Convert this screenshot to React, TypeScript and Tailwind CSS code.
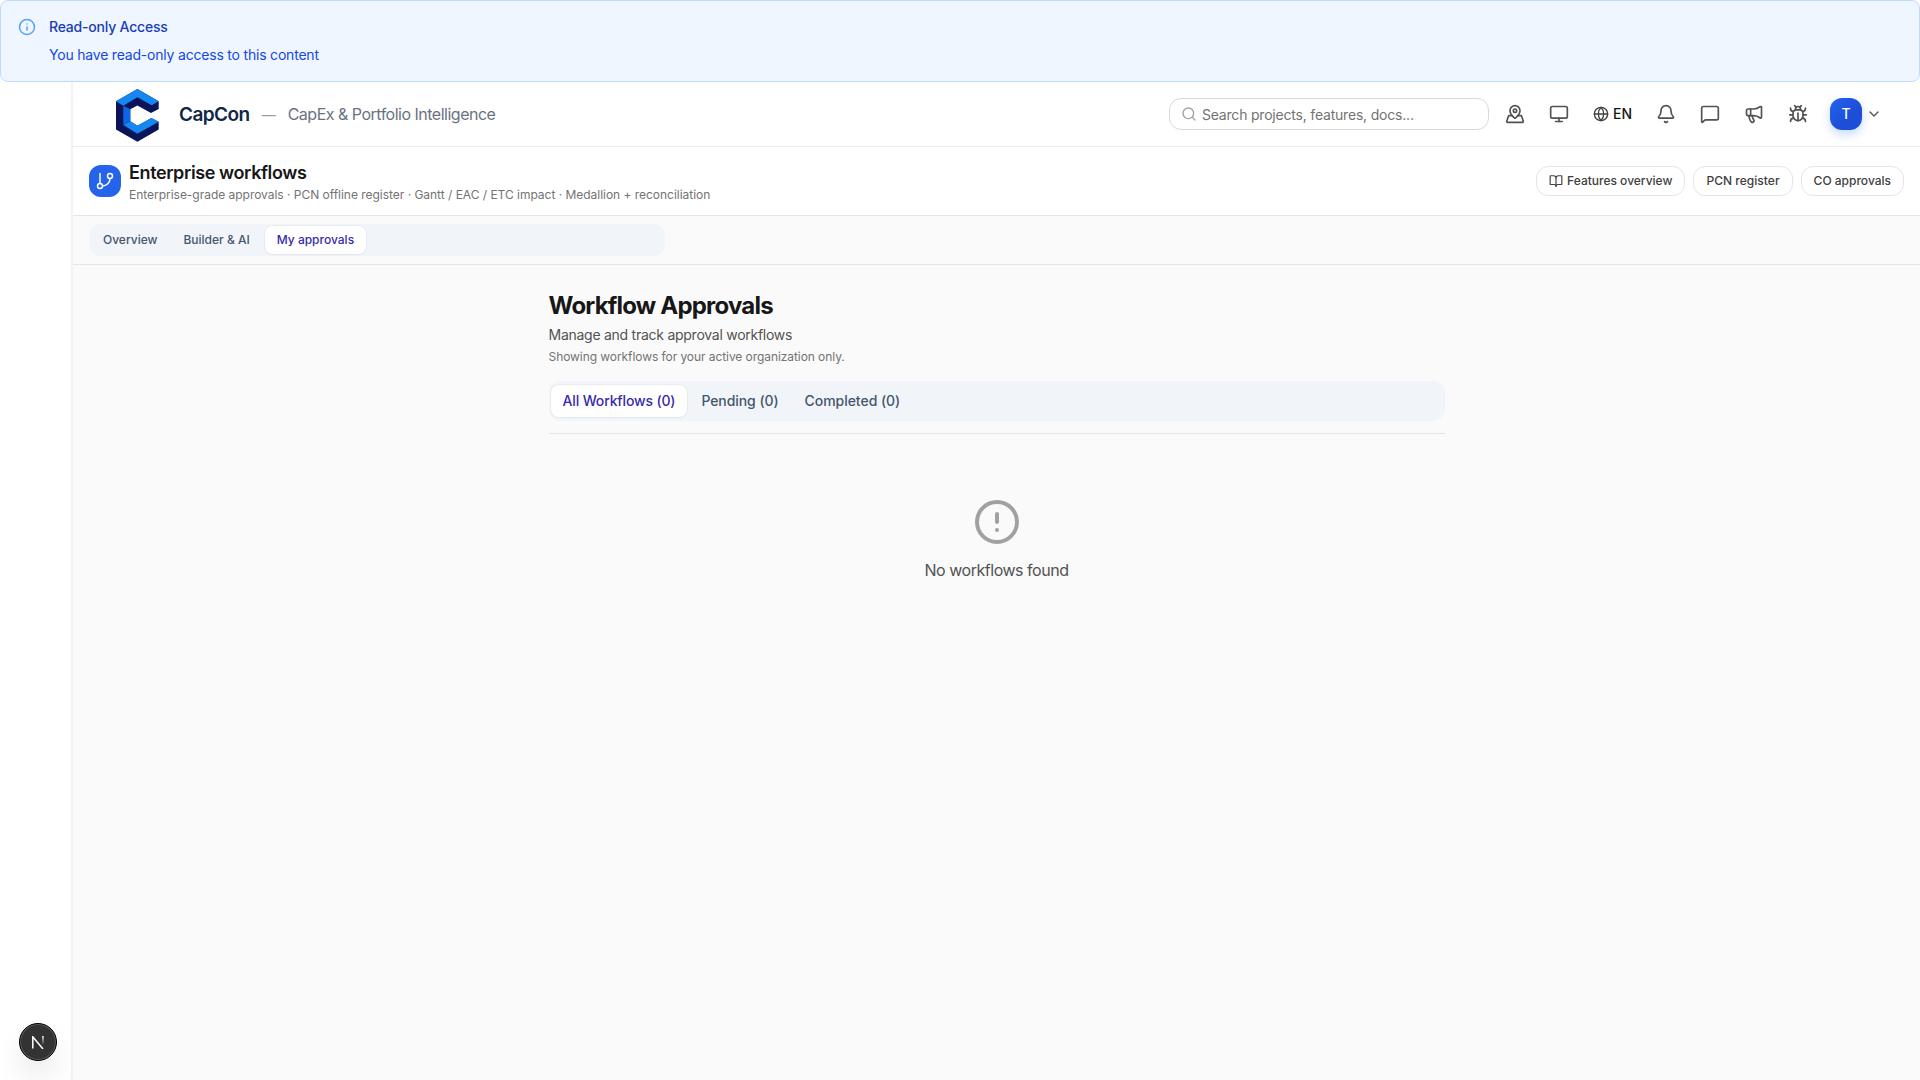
import React from "react";
import {
  Bell,
  BookOpen,
  Bug,
  ChevronDown,
  CircleAlert,
  GitBranch,
  Globe,
  Info,
  MapPinned,
  Megaphone,
  MessageSquare,
  Monitor,
  Search,
} from "lucide-react";

const Banner = () => (
  <div className="flex h-[82px] shrink-0 gap-[13px] rounded-lg border border-[#bedbff] bg-[#eff6ff] px-4 pt-4">
    <Info className="mt-px ml-px h-[18px] w-[18px] text-[#51a2ff]" />
    <div className="text-sm tracking-[-0.2px]">
      <h3 className="font-medium text-[#193cb8]">Read-only Access</h3>
      <p className="mt-2 text-[#1447e6]">
        You have read-only access to this content
      </p>
    </div>
  </div>
);

const Logo = () => (
  <svg className="mt-0.5 h-[53px] w-[43px]" viewBox="0 0 43 53">
    <path
      d="M0 12.300 21.400 0 42.700 12.300V20L35 24 21.400 16.500 14.300 20.300v12L21.400 36.700l14-7.700 7.300 3.700v7.800L21.400 52.700 0 40.500z"
      fill="#0b1458"
    />
    <path
      d="M0 12.300 21.400 0 42.700 12.300 35.700 16.300 21.400 8.300 7.300 16.700z"
      fill="#1488f0"
    />
    <path d="M7.300 16.700 14.300 20.300v12L7.300 36z" fill="#0a68e4" />
    <path
      d="M7.300 36 14.300 32.300 21.400 36.700l14-7.700 7.300 3.700-21.300 12z"
      fill="#1488f0"
    />
  </svg>
);

const headerIcons = [Bell, MessageSquare, Megaphone, Bug];

const Header = () => (
  <header className="flex h-[65px] shrink-0 items-center border-b border-[#ededed] bg-white pr-[38px] pl-[43px]">
    <Logo />
    <span className="ml-5 pt-0.5 text-[19px] font-semibold tracking-[-0.55px] text-[#0f2747]">
      CapCon
    </span>
    <span className="ml-3 pt-px text-sm text-[#99a1af]">—</span>
    <span className="ml-3 text-base tracking-[-0.5px] text-[#6a7282]">
      CapEx &amp; Portfolio Intelligence
    </span>
    <div className="ml-auto flex items-center">
      <div className="flex h-8 w-80 items-center gap-[5px] rounded-xl border border-[#d9d9d9] px-[11px] text-sm tracking-[-0.2px] text-[#737373]">
        <Search className="h-4 w-4 text-[#a1a1a1]" />
        <span className="pt-px">Search projects, features, docs...</span>
      </div>
      <MapPinned className="ml-4 h-5 w-5 text-[#525252]" />
      <Monitor className="ml-6 h-5 w-5 text-[#525252]" />
      <div className="ml-6 flex items-center gap-1 text-sm font-medium text-[#171717]">
        <Globe className="h-4 w-4 text-[#404040]" />
        EN
      </div>
      <div className="ml-6 flex items-center gap-6 text-[#525252]">
        {headerIcons.map((Icon, i) => (
          <Icon key={i} className="h-5 w-5" />
        ))}
      </div>
      <div className="ml-[22px] flex h-8 w-8 items-center justify-center rounded-xl bg-linear-to-br from-[#2563eb] to-[#1d4ed8] to-60% text-sm font-medium text-white shadow-[0_4px_10px_rgba(59,130,246,0.3)]">
        T
      </div>
      <ChevronDown className="ml-1 h-4 w-4 text-[#525252]" />
    </div>
  </header>
);

const PageTitle = () => (
  <div className="flex h-[69px] shrink-0 items-center border-b border-[#e5e5e5] bg-white px-4">
    <div className="flex h-8 w-8 items-center justify-center rounded-xl bg-[#2563eb] text-white">
      <GitBranch className="h-5 w-5" strokeWidth={1.75} />
    </div>
    <div className="ml-2 pt-0.5">
      <h1 className="text-lg leading-6 font-semibold tracking-[-0.39px] text-[#171717]">
        Enterprise workflows
      </h1>
      <p className="mt-0.5 text-xs leading-4 tracking-[-0.025px] text-[#737373]">
        Enterprise-grade approvals · PCN offline register · Gantt / EAC / ETC
        impact · Medallion + reconciliation
      </p>
    </div>
    <div className="ml-auto flex gap-2 text-xs font-medium text-[#404040]">
      <button className="flex h-[30px] items-center gap-1 rounded-xl border border-[#e5e5e5] px-3">
        <BookOpen className="h-3.5 w-3.5" />
        Features overview
      </button>
      <button className="h-[30px] rounded-xl border border-[#e5e5e5] px-3 tracking-[0.03px]">
        PCN register
      </button>
      <button className="h-[30px] rounded-xl border border-[#e5e5e5] px-3">
        CO approvals
      </button>
    </div>
  </div>
);

const SectionTabs = () => (
  <div className="h-[49px] shrink-0 border-b border-[#e5e5e5] px-4 pt-2">
    <div className="flex h-8 w-xl items-center rounded-xl bg-[#f1f5f9] px-0.5 text-xs font-medium text-[#45556c]">
      <button className="px-3">Overview</button>
      <button className="ml-0.5 px-3">Builder &amp; AI</button>
      <button className="ml-[3px] h-7 rounded-lg bg-white px-3 text-[#372aac] shadow-xs ring-1 ring-[#e2e8f0]/70">
        My approvals
      </button>
    </div>
  </div>
);

const Approvals = () => (
  <main className="mx-auto w-4xl pt-[25px]">
    <h2 className="text-2xl leading-8 font-bold tracking-[-0.8px] text-[#171717]">
      Workflow Approvals
    </h2>
    <p className="mt-[3px] text-sm tracking-[-0.26px] text-[#525252]">
      Manage and track approval workflows
    </p>
    <p className="mt-1 text-xs tracking-[-0.07px] text-[#737373]">
      Showing workflows for your active organization only.
    </p>
    <div className="border-b border-[#e5e5e5] pt-4 pb-3">
      <div className="flex h-10 items-center rounded-xl bg-[#f1f5f9] px-0.5 text-sm font-medium tracking-[-0.14px] text-[#45556c]">
        <button className="h-8 rounded-lg bg-white px-3 text-[#372aac] shadow-xs ring-1 ring-[#e2e8f0]/70">
          All Workflows (0)
        </button>
        <button className="ml-0.5 px-3 tracking-[-0.07px]">Pending (0)</button>
        <button className="ml-0.5 px-3 tracking-[-0.04px]">
          Completed (0)
        </button>
      </div>
    </div>
    <div className="flex flex-col items-center pt-16">
      <CircleAlert className="h-12 w-12 text-[#a1a1a1]" />
      <p className="mt-3 text-base tracking-[-0.47px] text-[#525252]">
        No workflows found
      </p>
    </div>
  </main>
);

const DevBadge = () => (
  <div className="absolute bottom-[19px] left-[19px] flex h-[38px] w-[38px] items-center justify-center rounded-full border border-black bg-[#333] shadow-[0_16px_32px_-8px_rgba(0,0,0,0.24)] ring-1 ring-white/20 ring-inset">
    <svg className="h-[13px] w-3" viewBox="0 0 12 13" fill="none">
      <defs>
        <linearGradient id="fade" x1="0" y1="0" x2="0" y2="1">
          <stop offset="0" stopColor="#fff" />
          <stop offset="1" stopColor="#fff" stopOpacity="0" />
        </linearGradient>
      </defs>
      <path d="M.8 12.500V.8L11 13" stroke="#fff" strokeWidth="1.500" />
      <rect x="10.200" y="0" width="1.500" height="9" fill="url(#fade)" />
    </svg>
  </div>
);

const App = () => {
  return (
    <div className="relative flex h-screen flex-col overflow-hidden bg-white font-[Inter,sans-serif] antialiased">
      <Banner />
      <div className="flex min-h-0 flex-1">
        <aside className="w-[73px] shrink-0 border-r-2 border-[#f2f2f2] bg-white" />
        <div className="flex min-w-0 flex-1 flex-col bg-[#fafafa]">
          <Header />
          <PageTitle />
          <SectionTabs />
          <Approvals />
        </div>
      </div>
      <DevBadge />
    </div>
  );
};

export default App;
